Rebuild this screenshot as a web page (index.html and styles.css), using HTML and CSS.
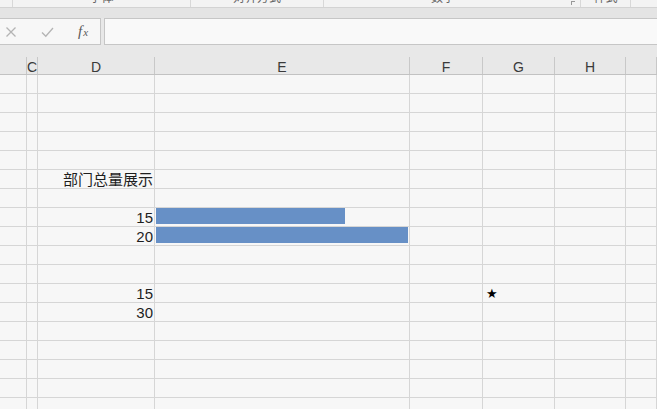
FILE: index.html
```html
<!DOCTYPE html>
<html lang="zh">
<head>
<meta charset="utf-8">
<title>Sheet</title>
<link rel="stylesheet" href="styles.css">
</head>
<body>
<div class="ribbon">
  <div class="group g0"></div>
  <div class="group g1"><span class="label">字体</span></div>
  <div class="group g2"><span class="label">对齐方式</span></div>
  <div class="group g3"><span class="label">数字</span><span class="launcher"></span></div>
  <div class="group g4"><span class="label">样式</span></div>
  <div class="group g5"></div>
</div>
<div class="band"></div>
<div class="formula">
  <div class="fxbox">
    <svg class="ico cancel" width="12" height="12" viewBox="0 0 12 12"><path d="M1.5 1.5 L10.5 10.5 M10.5 1.5 L1.5 10.5" stroke="#b4b4b4" stroke-width="1.3" fill="none"/></svg>
    <svg class="ico enter" width="13" height="12" viewBox="0 0 13 12"><path d="M1 6.5 L4.8 10.3 L12 2" stroke="#b4b4b4" stroke-width="1.3" fill="none"/></svg>
    <span class="fx"><span class="f">f</span><span class="x">x</span></span>
  </div>
  <div class="input"></div>
</div>
<div class="gap"></div>
<div class="colhead">
  <div class="hc"></div>
  <div class="hc">C</div>
  <div class="hc">D</div>
  <div class="hc">E</div>
  <div class="hc">F</div>
  <div class="hc">G</div>
  <div class="hc">H</div>
  <div class="hc"></div>
</div>
<div class="sheet">
  <div class="row"><div class="c"></div><div class="c"></div><div class="c"></div><div class="c"></div><div class="c"></div><div class="c"></div><div class="c"></div><div class="c"></div></div>
  <div class="row"><div class="c"></div><div class="c"></div><div class="c"></div><div class="c"></div><div class="c"></div><div class="c"></div><div class="c"></div><div class="c"></div></div>
  <div class="row"><div class="c"></div><div class="c"></div><div class="c"></div><div class="c"></div><div class="c"></div><div class="c"></div><div class="c"></div><div class="c"></div></div>
  <div class="row"><div class="c"></div><div class="c"></div><div class="c"></div><div class="c"></div><div class="c"></div><div class="c"></div><div class="c"></div><div class="c"></div></div>
  <div class="row"><div class="c"></div><div class="c"></div><div class="c"></div><div class="c"></div><div class="c"></div><div class="c"></div><div class="c"></div><div class="c"></div></div>
  <div class="row"><div class="c"></div><div class="c"></div><div class="c txt"><span class="cjk">部门总量展示</span></div><div class="c"></div><div class="c"></div><div class="c"></div><div class="c"></div><div class="c"></div></div>
  <div class="row"><div class="c"></div><div class="c"></div><div class="c"></div><div class="c"></div><div class="c"></div><div class="c"></div><div class="c"></div><div class="c"></div></div>
  <div class="row"><div class="c"></div><div class="c"></div><div class="c num">15</div><div class="c barcell"><div class="bar" style="width:189px"></div></div><div class="c"></div><div class="c"></div><div class="c"></div><div class="c"></div></div>
  <div class="row"><div class="c"></div><div class="c"></div><div class="c num">20</div><div class="c barcell"><div class="bar" style="width:252px"></div></div><div class="c"></div><div class="c"></div><div class="c"></div><div class="c"></div></div>
  <div class="row"><div class="c"></div><div class="c"></div><div class="c"></div><div class="c"></div><div class="c"></div><div class="c"></div><div class="c"></div><div class="c"></div></div>
  <div class="row"><div class="c"></div><div class="c"></div><div class="c"></div><div class="c"></div><div class="c"></div><div class="c"></div><div class="c"></div><div class="c"></div></div>
  <div class="row"><div class="c"></div><div class="c"></div><div class="c num">15</div><div class="c"></div><div class="c"></div><div class="c star">★</div><div class="c"></div><div class="c"></div></div>
  <div class="row"><div class="c"></div><div class="c"></div><div class="c num">30</div><div class="c"></div><div class="c"></div><div class="c"></div><div class="c"></div><div class="c"></div></div>
  <div class="row"><div class="c"></div><div class="c"></div><div class="c"></div><div class="c"></div><div class="c"></div><div class="c"></div><div class="c"></div><div class="c"></div></div>
  <div class="row"><div class="c"></div><div class="c"></div><div class="c"></div><div class="c"></div><div class="c"></div><div class="c"></div><div class="c"></div><div class="c"></div></div>
  <div class="row"><div class="c"></div><div class="c"></div><div class="c"></div><div class="c"></div><div class="c"></div><div class="c"></div><div class="c"></div><div class="c"></div></div>
  <div class="row"><div class="c"></div><div class="c"></div><div class="c"></div><div class="c"></div><div class="c"></div><div class="c"></div><div class="c"></div><div class="c"></div></div>
  <div class="row"><div class="c"></div><div class="c"></div><div class="c"></div><div class="c"></div><div class="c"></div><div class="c"></div><div class="c"></div><div class="c"></div></div>
</div>
</body>
</html>
```
FILE: styles.css
```css
* { box-sizing: border-box; }
html, body { margin: 0; padding: 0; }
body {
  width: 657px;
  height: 409px;
  overflow: hidden;
  background: #f7f7f7;
  font-family: "Liberation Sans", Arial, sans-serif;
  color: #222;
}

/* ribbon remnant (group labels cut off by the top edge) */
.ribbon {
  display: flex;
  height: 8px;
  background: #f3f3f3;
  border-bottom: 1px solid #d3d3d3;
  overflow: hidden;
}
.group {
  height: 7px;
  display: flex;
  justify-content: center;
  overflow: hidden;
  border-right: 1px solid #d8d8d8;
  position: relative;
}
.g0 { width: 13px; }
.g1 { width: 178px; }
.g2 { width: 133px; }
.g3 { width: 257px; padding-right: 18px; }
.g4 { width: 50px; }
.g5 { flex: 1; border-right: none; }
.label {
  font: 12px/12px "Noto Sans CJK SC", sans-serif;
  color: #666;
  margin-top: -9px;
}
.launcher {
  position: absolute;
  right: 5px;
  top: 1px;
  width: 4px;
  height: 4px;
  border-left: 1px solid #999;
  border-top: 1px solid #999;
}

.band {
  height: 10px;
  background: #e4e4e4;
}

/* formula bar */
.formula {
  display: flex;
  gap: 3px;
  height: 27px;
  background: #e8e8e8;
}
.fxbox {
  width: 101px;
  display: flex;
  align-items: center;
  background: #f7f7f7;
  border: 1px solid #c6c6c6;
  border-left: none;
}
.ico { display: block; }
.cancel { margin-left: 5px; }
.enter { margin-left: 24px; }
.fx {
  margin-left: 24px;
  font-family: "Liberation Serif", "Times New Roman", serif;
  font-style: italic;
  color: #5a5a5a;
  display: flex;
  align-items: baseline;
}
.fx .f { font-size: 15px; }
.fx .x { font-size: 11px; margin-left: 1px; }
.input {
  flex: 1;
  background: #f9f9f9;
  border: 1px solid #c6c6c6;
  border-right: none;
}

.gap {
  height: 12px;
  background: #e8e8e8;
}

/* column headers */
.colhead, .row {
  display: grid;
  grid-template-columns: 27px 11px 117px 255px 73px 72px 71px 1fr;
}
.colhead {
  height: 18px;
  background: #e8e8e8;
  border-bottom: 1px solid #c2c2c2;
}
.hc {
  border-right: 1px solid #c8c8c8;
  display: flex;
  align-items: flex-end;
  justify-content: center;
  font-size: 14px;
  line-height: 14px;
  color: #3a3a3a;
}

/* grid */
.row { height: 19px; }
.c {
  border-right: 1px solid #d6d6d6;
  border-bottom: 1px solid #d6d6d6;
  display: flex;
  min-width: 0;
}
.num {
  justify-content: flex-end;
  align-items: flex-end;
  padding-right: 1px;
  font-size: 15px;
  line-height: 17px;
  color: #1e1e1e;
}
.txt {
  justify-content: flex-end;
  align-items: flex-end;
  padding-right: 1px;
  padding-bottom: 1px;
  overflow: visible;
}
.cjk {
  font-family: "Noto Sans CJK SC", sans-serif;
  font-size: 15px;
  line-height: 16px;
  color: #1e1e1e;
  white-space: nowrap;
}
.barcell { align-items: flex-start; }
.bar {
  height: 16px;
  margin-left: 1px;
  background: #6790c6;
}
.star {
  align-items: flex-end;
  padding-left: 3px;
  padding-bottom: 1px;
  font-family: "DejaVu Sans", sans-serif;
  font-size: 13px;
  line-height: 15px;
  color: #000;
}
```
